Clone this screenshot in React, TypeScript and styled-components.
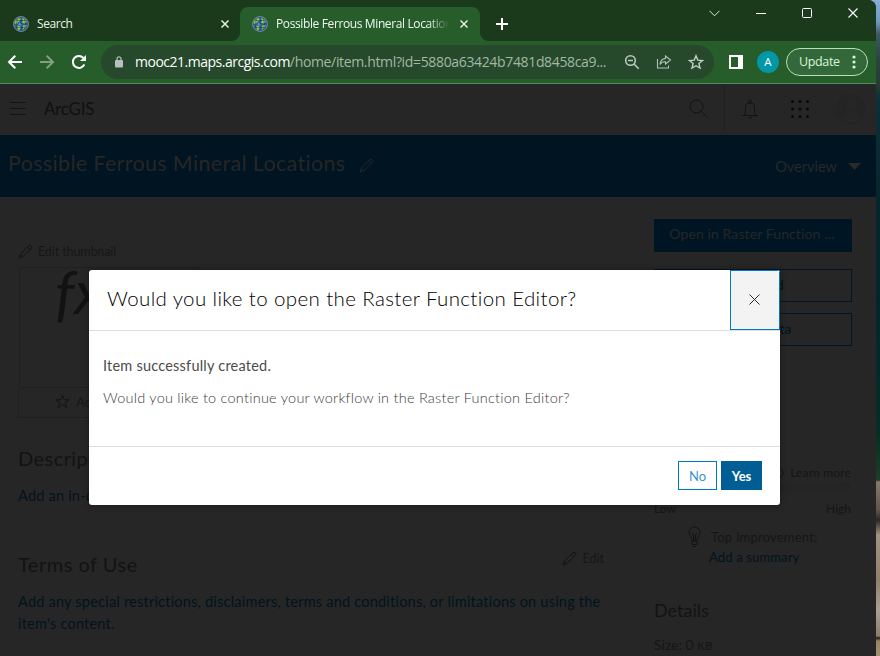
import React from "react";
import styled, { createGlobalStyle, css } from "styled-components";

const UI = `"Open Sans", "Noto Sans", sans-serif`;
const AV = `Lato, "Open Sans", sans-serif`;

const Global = createGlobalStyle`
  *, *::before, *::after { box-sizing: border-box; }
  html, body { margin: 0; padding: 0; overflow: hidden; background: #262626; }
  button { font: inherit; padding: 0; margin: 0; }
`;

type TextProps = { $size: number; $lh: number; $color: string; $ls?: number; $weight?: number; $font?: string };
const Text = styled.span<TextProps>`
  display: block;
  white-space: nowrap;
  font-family: ${(p) => p.$font ?? AV};
  font-size: ${(p) => p.$size}px;
  line-height: ${(p) => p.$lh}px;
  color: ${(p) => p.$color};
  letter-spacing: ${(p) => p.$ls ?? 0}px;
  font-weight: ${(p) => p.$weight ?? 400};
`;

const Desktop = styled.div`
  display: flex;
  width: 880px;
  height: 656px;
  overflow: hidden;
  background: linear-gradient(180deg, #86aed8 0, #7099bf 22px, #3c5a63 34px, #2c4440 60px, #263c33 84px, #0d3038 100px, #06262c 190px, #04262b 300px, #072c25 430px, #1d3d26 480px, #85796c 482px, #5e564a 510px, #2a2723 520px, #a09384 535px, #8f8069 580px, #a8a196 610px, #8a7d68 636px, #20201e 638px, #978468 641px, #a39072 656px);
`;
const BrowserWindow = styled.div`
  width: 876px;
  height: 656px;
  flex: none;
  display: flex;
  flex-direction: column;
  background: #262626;
  border-top-right-radius: 8px;
  overflow: hidden;
`;

/* ---- browser chrome ---- */
const TabStrip = styled.div`
  height: 41px;
  display: flex;
  align-items: flex-end;
  background: #1a3a1b;
`;
const Tab = styled.div<{ $active?: boolean }>`
  position: relative;
  width: 240px;
  height: 34px;
  display: flex;
  align-items: center;
  padding: 0 ${(p) => (p.$active ? 12 : 11)}px 0 ${(p) => (p.$active ? 12 : 13)}px;
  gap: 8px;
  ${(p) =>
    p.$active &&
    css`
      background: #275d2a;
      border-radius: 8px 8px 0 0;
      &::before, &::after {
        content: "";
        position: absolute;
        bottom: 0;
        width: 8px;
        height: 8px;
      }
      &::before { left: -8px; background: radial-gradient(circle at 0 0, transparent 7.5px, #275d2a 8px); }
      &::after { right: -8px; background: radial-gradient(circle at 100% 0, transparent 7.5px, #275d2a 8px); }
    `}
`;
const TabTitle = styled(Text)<{ $fade?: boolean }>`
  flex: 1;
  overflow: hidden;
  ${(p) => p.$fade && css`mask-image: linear-gradient(90deg, #000 152px, transparent 173px);`}
`;
const NewTab = styled.div`
  width: 44px;
  height: 34px;
  display: grid;
  place-items: center;
`;
const Controls = styled.div`
  margin-left: auto;
  align-self: flex-start;
  display: flex;
  height: 26px;
`;
const Control = styled.div`
  width: 46px;
  display: grid;
  place-items: center;
`;
const Toolbar = styled.div`
  height: 43px;
  display: flex;
  align-items: center;
  background: #275d2a;
  border-bottom: 1px solid #4f8f53;
  padding-left: 7px;
`;
const NavIcons = styled.div`
  display: flex;
  gap: 16px;
  width: 94px;
`;
const Omnibox = styled.div`
  width: 613px;
  height: 34px;
  border-radius: 17px;
  background: #25492a;
  display: flex;
  align-items: center;
  padding: 0 9px 0 14px;
`;
const Url = styled(Text)`
  margin-left: 12px;
  width: 489px;
  b { font-weight: 400; color: #fff; letter-spacing: -0.49px; }
`;
const OmniIcons = styled.div`
  display: flex;
  gap: 16px;
`;
const ProfileDot = styled.div`
  width: 22px;
  height: 22px;
  border-radius: 50%;
  margin: 0 7px 0 14px;
  background: #0097a7;
  display: grid;
  place-items: center;
`;
const UpdatePill = styled.div`
  width: 82px;
  height: 28px;
  border: 1px solid #b9e0b8;
  border-radius: 14px;
  background: #33693a;
  display: flex;
  align-items: center;
  justify-content: space-between;
  padding: 0 11px 0 12px;
`;

/* ---- page ---- */
const SiteHeader = styled.div`
  height: 51px;
  display: flex;
  align-items: center;
  padding: 0 0 2px 9px;
`;
const Brand = styled(Text)`
  margin-left: 17px;
  flex: 1;
`;
const HeaderCell = styled.div<{ $w: number; $line?: boolean }>`
  width: ${(p) => p.$w}px;
  height: 49px;
  display: grid;
  place-items: center;
  border-left: ${(p) => (p.$line ? "1px solid #202020" : "0")};
`;
const Banner = styled.div`
  height: 62px;
  display: flex;
  background: #001421;
  padding: 0 15px 0 8px;
`;
const BannerTitle = styled(Text)`
  margin: 14px 14px 0 0;
`;
const BannerIcon = styled.div`
  margin-top: 23px;
  line-height: 0;
`;
const Overview = styled.div`
  margin: 23px 0 0 auto;
  display: flex;
  gap: 11px;
`;
const Content = styled.div`
  flex: 1;
  min-height: 0;
  display: flex;
`;
const Main = styled.div`
  width: 604px;
  padding: 46px 0 0 18px;
`;
const IconRow = styled.div<{ $gap?: number }>`
  display: flex;
  align-items: center;
  gap: ${(p) => p.$gap ?? 6}px;
`;
const Thumb = styled.div`
  margin: 7px 0 0 1px;
  width: 181px;
  height: 121px;
  border: 1px solid #202020;
  padding: 0 0 0 35px;
`;
const Fx = styled.div`
  font: italic 400 61px/46px Lato, "Open Sans", sans-serif;
  color: #121212;
`;
const FavoriteBar = styled.div`
  width: 182px;
  height: 30px;
  border: 1px solid #202020;
  border-top: 0;
  display: flex;
  align-items: center;
  padding: 0 0 2px 36px;
  gap: 6px;
`;
const SectionHead = styled.div<{ $mt: number }>`
  margin-top: ${(p) => p.$mt}px;
  height: 26px;
  display: flex;
  align-items: flex-start;
  justify-content: space-between;
`;
const EditRow = styled(IconRow)`
  margin-top: -1px;
`;
const LinkBlock = styled.div`
  margin-top: 14px;
`;
const Aside = styled.div`
  margin-left: 50px;
  width: 198px;
  padding-top: 22px;
`;
const SideButton = styled.div<{ $solid?: boolean; $mt?: number }>`
  height: 33px;
  margin-top: ${(p) => p.$mt ?? 0}px;
  border: 1px solid #001523;
  background: ${(p) => (p.$solid ? "#001523" : "transparent")};
  display: grid;
  place-items: center;
  padding: 0 ${(p) => (p.$solid ? 2 : 0)}px ${(p) => (p.$solid ? 3 : 2)}px 0;
`;
const InfoTitle = styled(Text)`
  margin-top: 91px;
`;
const LearnRow = styled.div`
  display: flex;
  justify-content: flex-end;
  align-items: center;
  gap: 6px;
  margin: 3px 1px 0 0;
`;
const Meter = styled.div`
  height: 10px;
  margin: 2px 2px 0 0;
  border-radius: 5px;
  background: #242424;
`;
const Spread = styled.div`
  display: flex;
  justify-content: space-between;
  margin: 7px 1px 0 0;
`;
const Improve = styled.div`
  margin: 9px 0 0 34px;
  display: flex;
  gap: 8px;
`;
const ImproveText = styled.div`
  padding-top: 1px;
  & > :first-child { padding-left: 2px; }
`;
const Details = styled(Text)`
  margin-top: 31px;
`;
const Size = styled(Text)`
  margin-top: 13px;
  small { font-size: 11.5px; }
`;

/* ---- dialog ---- */
const Dialog = styled.div`
  position: absolute;
  left: 89px;
  top: 270px;
  width: 691px;
  height: 235px;
  background: #fff;
  border-radius: 3px;
  overflow: hidden;
  box-shadow: 0 0 6px rgba(0, 0, 0, 0.35);
  display: flex;
  flex-direction: column;
`;
const DialogHead = styled.div`
  height: 61px;
  display: flex;
  justify-content: space-between;
  border-bottom: 1px solid #dedede;
  padding-left: 18px;
`;
const DialogTitle = styled(Text)`
  margin-top: 14px;
`;
const CloseButton = styled.button`
  width: 50px;
  height: 60px;
  border: 1px solid #0079c1;
  background: #f3f3f3;
  display: grid;
  place-items: center;
  padding: 0 1px 1px 0;
`;
const DialogBody = styled.div`
  height: 115px;
  padding: 24px 14px 0;
  display: flex;
  flex-direction: column;
  gap: 10px;
`;
const DialogFoot = styled.div`
  flex: 1;
  border-top: 1px solid #dedede;
  display: flex;
  justify-content: flex-end;
  gap: 4px;
  padding: 14px 18px 0 0;
`;
const Action = styled.button<{ $w: number; $primary?: boolean }>`
  width: ${(p) => p.$w}px;
  height: 29px;
  border: 1px solid ${(p) => (p.$primary ? "#005e95" : "#0079c1")};
  background: ${(p) => (p.$primary ? "#005e95" : "#fff")};
  display: grid;
  place-items: center;
`;

/* ---- icons ---- */
const Globe = () => (
  <svg width="16" height="16" viewBox="0 0 16 16">
    <circle cx="8" cy="8" r="7.5" fill="#2569a8" stroke="#77838a" />
    <path d="M2 5 5 2.200l3 .3-.8 2L5 6.200 4 8.600 1.600 8ZM8.800 2.200l3.400.8 1.600 3-2.600 1.800L9 6.400l1-2ZM4.400 9.400l3 .8.4 2-2 2.200L4 12.600ZM10 9.600l3.600-.8-.8 3-2.600 1.600Z" fill="#9cc146" />
    <path d="M6.500 6.600 9 8.400l-1 1.400-2.600-1Z" fill="#6db9ea" />
    <path d="M1 8h14M8 1v14M2.500 4.500h11M2.500 11.500h11M4.500 2.500q-2 5.500 0 11M11.500 2.500q2 5.500 0 11" stroke="#10283f" strokeWidth=".6" fill="none" opacity=".7" />
  </svg>
);
const Cross = ({ s = 8, c = "#e4efe4", w = 1.5 }: { s?: number; c?: string; w?: number }) => (
  <svg width={s} height={s} viewBox={`0 0 ${s} ${s}`}>
    <path d={`M.5.5 ${s - 0.5} ${s - 0.5}M${s - 0.5}.5.5 ${s - 0.5}`} stroke={c} strokeWidth={w} />
  </svg>
);
const Arrow = ({ c, flip }: { c: string; flip?: boolean }) => (
  <svg width="16" height="16" viewBox="0 0 16 16">
    <path transform={flip ? "translate(16 0) scale(-1 1)" : undefined} d="M15 8H2.500M8.300 1.700 2 8l6.300 6.300" fill="none" stroke={c} strokeWidth="2" />
  </svg>
);
const Pencil = ({ c }: { c: string }) => (
  <svg width="15" height="15" viewBox="0 0 15 15">
    <path d="M1 14 2.300 10.300 10.700 1.700q1.300-1 2.500 0t.2 2.600L4.800 12.700ZM9.500 3l2.600 2.600M2.300 10.300l2.500 2.400" fill="none" stroke={c} />
  </svg>
);

export default function App() {
  const dark = "#131313";
  const link = "#00141f";
  return (
    <>
      <Global />
      <Desktop>
        <BrowserWindow>
          <TabStrip>
            <Tab>
              <Globe />
              <TabTitle $font={UI} $size={12} $lh={16} $color="#e9f2e9" $ls={-0.42}>Search</TabTitle>
              <Cross />
            </Tab>
            <Tab $active>
              <Globe />
              <TabTitle $fade $font={UI} $size={12} $lh={16} $color="#f0f7f0" $ls={-0.38}>Possible Ferrous Mineral Locations</TabTitle>
              <Cross />
            </Tab>
            <NewTab>
              <svg width="12" height="12" viewBox="0 0 12 12"><path d="M6 0v12M0 6h12" stroke="#fff" strokeWidth="2" /></svg>
            </NewTab>
            <Controls>
              <Control><svg width="12" height="7" viewBox="0 0 12 7"><path d="M.5.8 5.500 5.800 10.500.8" fill="none" stroke="#dbe8db" /></svg></Control>
              <Control><svg width="10" height="2" viewBox="0 0 10 2"><path d="M0 1.500h10" stroke="#fff" /></svg></Control>
              <Control><svg width="10" height="10" viewBox="0 0 10 10"><rect x=".5" y=".5" width="9" height="9" rx="1" fill="none" stroke="#fff" /></svg></Control>
              <Control><Cross s={10} c="#fff" w={1.1} /></Control>
            </Controls>
          </TabStrip>
          <Toolbar>
            <NavIcons>
              <Arrow c="#fff" />
              <Arrow c="#81a182" flip />
              <svg width="16" height="16" viewBox="0 0 16 16">
                <path d="M13.300 10.500A6 6 0 1 1 12.400 4" fill="none" stroke="#fff" strokeWidth="2" />
                <path d="M15 1v6H9Z" fill="#fff" />
              </svg>
            </NavIcons>
            <Omnibox>
              <svg width="8" height="12" viewBox="0 0 8 12"><rect y="4" width="8" height="7.500" rx="1" fill="#b9bec2" /><path d="M2 5V2.800a2 2 0 0 1 4 0V5" fill="none" stroke="#b9bec2" strokeWidth="1.200" /></svg>
              <Url $font={UI} $size={14} $lh={20} $color="#a3b8a5" $ls={-0.345}><b>mooc21.maps.arcgis.com</b>/home/item.html?id=5880a63424b7481d8458ca9...</Url>
              <OmniIcons>
                <svg width="16" height="16" viewBox="0 0 16 16"><circle cx="6.500" cy="6.500" r="4.800" fill="none" stroke="#bcc8bd" strokeWidth="1.600" /><path d="m10 10 4.700 4.700M4 6.500h5" stroke="#bcc8bd" strokeWidth="1.600" /></svg>
                <svg width="16" height="16" viewBox="0 0 16 16"><path d="M1.500 5v9h11v-2.500M9.500 2l5 4-5 4V7.800q-4-.2-5.500 2.700.5-5.500 5.500-6.100Z" fill="none" stroke="#b4c2b5" strokeWidth="1.100" /></svg>
                <svg width="16" height="16" viewBox="0 0 16 16"><path d="m8 1.800 1.800 4.300 4.700.4-3.600 3 1.100 4.600L8 11.700l-4 2.400 1.100-4.600-3.600-3 4.700-.4Z" fill="none" stroke="#c3cec4" strokeWidth="1.400" /></svg>
              </OmniIcons>
            </Omnibox>
            <svg width="29" height="14" viewBox="0 0 29 14"><path d="M15 0h14v14H15Zm2 2v10h7V2Z" fill="#fff" fillRule="evenodd" /></svg>
            <ProfileDot><Text $font={UI} $size={11.5} $lh={16} $color="#fff">A</Text></ProfileDot>
            <UpdatePill>
              <Text $font={UI} $size={12.5} $lh={18} $color="#dcf3dc" $ls={-0.35}>Update</Text>
              <svg width="4" height="14" viewBox="0 0 4 14"><g fill="#dcf3dc"><circle cx="2" cy="2" r="1.600" /><circle cx="2" cy="7" r="1.600" /><circle cx="2" cy="12" r="1.600" /></g></svg>
            </UpdatePill>
          </Toolbar>

          <SiteHeader>
            <svg width="18" height="15" viewBox="0 0 18 15"><path d="M1 1.500h16M1 7.500h16M1 13.500h16" stroke="#141414" /></svg>
            <Brand $size={17} $lh={22} $color="#101010" $ls={-0.25}>ArcGIS</Brand>
            <HeaderCell $w={51}><svg width="19" height="19" viewBox="0 0 19 19"><circle cx="7.500" cy="7.500" r="6.500" fill="none" stroke={dark} /><path d="m12.300 12.300 6 6" stroke={dark} /></svg></HeaderCell>
            <HeaderCell $w={50} $line><svg width="18" height="20" viewBox="0 0 18 20"><path d="M1 16.500h16M3 16.500q1.500-2 1.500-5v-3Q4.500 4 9 4t4.500 4.500v3q0 3 1.500 5M7.300 18.500q1.700 1 3.400 0" fill="none" stroke={dark} /><circle cx="9" cy="2.500" r="1.400" fill="none" stroke={dark} /></svg></HeaderCell>
            <HeaderCell $w={52}><svg width="18" height="18" viewBox="0 0 18 18"><g fill="#0a0a0a">{[1.5, 9, 16.5].flatMap((y) => [1.5, 9, 16.5].map((x) => <circle key={`${x}-${y}`} cx={x} cy={y} r="1.500" />))}</g></svg></HeaderCell>
            <HeaderCell $w={50}><svg width="30" height="30" viewBox="0 0 30 30"><circle cx="15" cy="15" r="15" fill="#242424" /><circle cx="15" cy="11" r="5.500" fill="#262626" /><path d="M5 25q2-6 7-7h6q5 1 7 7-10 7-20 0" fill="#262626" /></svg></HeaderCell>
          </SiteHeader>

          <Banner>
            <BannerTitle $size={21.5} $lh={28} $color="#262626" $ls={0.34}>Possible Ferrous Mineral Locations</BannerTitle>
            <BannerIcon><Pencil c="#262626" /></BannerIcon>
            <Overview>
              <Text $size={14.5} $lh={18} $color="#282828">Overview</Text>
              <svg width="13" height="14" viewBox="0 0 13 14"><path d="M0 5h13L6.500 12Z" fill="#2a2a2a" /></svg>
            </Overview>
          </Banner>

          <Content>
            <Main>
              <IconRow $gap={5}><Pencil c={dark} /><Text $size={12.5} $lh={17} $color="#161616" $ls={-0.1}>Edit thumbnail</Text></IconRow>
              <Thumb><Fx>fx</Fx></Thumb>
              <FavoriteBar>
                <svg width="15" height="15" viewBox="0 0 15 15"><path d="m7.500 1 1.700 4.700h4.900l-3.900 3 1.400 4.800-4.100-2.900-4.100 2.900 1.400-4.800-3.900-3h4.900Z" fill="none" stroke={dark} /></svg>
                <Text $size={13} $lh={18} $color="#161616">Add to Favorites</Text>
              </FavoriteBar>
              <SectionHead $mt={27}><Text $size={20} $lh={26} $color={dark} $ls={0.45}>Description</Text></SectionHead>
              <LinkBlock><Text $size={14.5} $lh={22} $color={link} $ls={0.22}>Add an in-depth description of the item.</Text></LinkBlock>
              <SectionHead $mt={44}>
                <Text $size={20} $lh={26} $color={dark} $ls={0.5}>Terms of Use</Text>
                <EditRow><Pencil c={dark} /><Text $size={12.5} $lh={17} $color="#161616">Edit</Text></EditRow>
              </SectionHead>
              <LinkBlock>
                <Text $size={14.5} $lh={22} $color={link} $ls={0.22}>Add any special restrictions, disclaimers, terms and conditions, or limitations on using the</Text>
                <Text $size={14.5} $lh={22} $color={link} $ls={0.22}>item's content.</Text>
              </LinkBlock>
            </Main>
            <Aside>
              <SideButton $solid><Text $size={14} $lh={20} $color="#262626" $ls={0.1}>Open in Raster Function …</Text></SideButton>
              <SideButton $mt={17}><Text $size={13.5} $lh={20} $color={link}>Download</Text></SideButton>
              <SideButton $mt={11}><Text $size={13.5} $lh={20} $color={link} $ls={0.15}>Update Data</Text></SideButton>
              <InfoTitle $size={17} $lh={24} $color={dark}>Item Information</InfoTitle>
              <LearnRow>
                <svg width="14" height="14" viewBox="0 0 14 14"><circle cx="7" cy="7" r="6" fill="none" stroke={dark} /><path d="M7 6v4M7 4v1" stroke={dark} /></svg>
                <Text $size={12} $lh={17} $color="#151515" $ls={0.15}>Learn more</Text>
              </LearnRow>
              <Meter />
              <Spread>
                <Text $size={12} $lh={17} $color="#151515">Low</Text>
                <Text $size={12} $lh={17} $color="#151515">High</Text>
              </Spread>
              <Improve>
                <svg width="13" height="22" viewBox="0 0 13 22"><path d="M4 14.500V13Q1 10 1 6.500a5.500 5.500 0 0 1 11 0Q12 10 9 13v1.500ZM5.500 14V9L4 7M7.500 14V9L9 7M4 15h5v3.500H4ZM5 20.500h3" fill="none" stroke={dark} /></svg>
                <ImproveText>
                  <Text $size={13} $lh={20} $color="#151515" $ls={0.2}>Top Improvement:</Text>
                  <Text $size={13} $lh={20} $color={link} $ls={0.15}>Add a summary</Text>
                </ImproveText>
              </Improve>
              <Details $size={18} $lh={24} $color={dark}>Details</Details>
              <Size $size={14} $lh={20} $color="#151515">Size: 0 <small>KB</small></Size>
            </Aside>
          </Content>
        </BrowserWindow>
      </Desktop>

      <Dialog role="dialog">
        <DialogHead>
          <DialogTitle $size={20.5} $lh={28} $color="#000" $weight={300} $ls={0.38}>Would you like to open the Raster Function Editor?</DialogTitle>
          <CloseButton aria-label="Close"><Cross s={11} c="#2b2b2b" w={1} /></CloseButton>
        </DialogHead>
        <DialogBody>
          <Text $size={14.5} $lh={22} $color="#4c4c4c" $ls={0.22}>Item successfully created.</Text>
          <Text $size={14.5} $lh={22} $color="#3c3c3c" $weight={300} $ls={0.24}>Would you like to continue your workflow in the Raster Function Editor?</Text>
        </DialogBody>
        <DialogFoot>
          <Action $w={39}><Text $size={13} $lh={18} $color="#3c94cc">No</Text></Action>
          <Action $w={41} $primary><Text $size={13} $lh={18} $color="#fff" $weight={700}>Yes</Text></Action>
        </DialogFoot>
      </Dialog>
    </>
  );
}
